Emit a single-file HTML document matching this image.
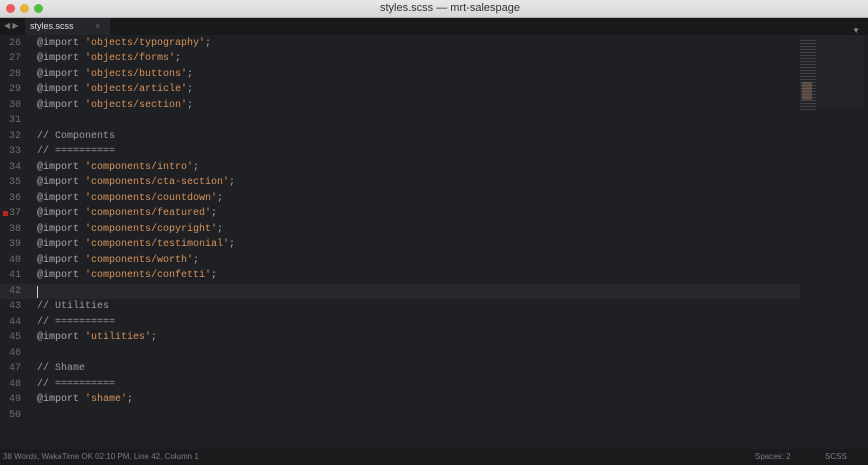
<!DOCTYPE html>
<html><head><meta charset="utf-8"><style>
html,body{margin:0;width:868px;height:465px;overflow:hidden}
body{background:#1f2023;font-family:"Liberation Sans",sans-serif;position:relative}
.title{position:absolute;left:0;top:0;width:868px;height:17px;background:linear-gradient(#e8e8e8,#d6d6d6);border-bottom:1px solid #b0b0b0;z-index:3}
.dot{position:absolute;top:4px;width:9px;height:9px;border-radius:50%}
.title .t{position:absolute;left:380px;top:2px;font-size:11px;color:#333}
.tabs{position:absolute;top:18px;left:0;width:868px;height:17px;background:#18191b;z-index:3}
.tab{position:absolute;left:25px;top:0;width:85px;height:17px;background:#26272b;color:#ddd;font-size:9px;line-height:17px;padding-left:5px;box-sizing:border-box}
.code{position:absolute;left:0;top:35.5px;width:800px;font-family:"Liberation Mono",monospace;font-size:10px;line-height:15.52px}
.l{height:15.52px;position:relative}
.n{position:absolute;left:9px;color:#6c6d72}
.c{position:absolute;left:37px;color:#a8a9b0;white-space:pre}
.s{color:#d8935c}
.cm{color:#9a9ba0}
.cur{background:#27282c}
.status{position:absolute;left:0;top:449px;width:868px;height:16px;background:#1a1b1d;color:#7a7b80;font-size:8px;line-height:16px}
</style></head><body>
<div class="title">
<div class="dot" style="left:6px;background:#ee5a5a"></div>
<div class="dot" style="left:20px;background:#e8b23a"></div>
<div class="dot" style="left:34px;background:#4ec13c"></div>
<div class="t">styles.scss — mrt-salespage</div>
</div>
<div class="tabs"><span style="position:absolute;left:4px;top:3px;color:#777;font-size:8px">◀ ▶</span><div class="tab">styles.scss<span style="position:absolute;left:70px;color:#666">×</span></div></div>
<div class="code"><div class="l"><span class="n">26</span><span class="c">@import <span class="s">'objects/typography'</span>;</span></div><div class="l"><span class="n">27</span><span class="c">@import <span class="s">'objects/forms'</span>;</span></div><div class="l"><span class="n">28</span><span class="c">@import <span class="s">'objects/buttons'</span>;</span></div><div class="l"><span class="n">29</span><span class="c">@import <span class="s">'objects/article'</span>;</span></div><div class="l"><span class="n">30</span><span class="c">@import <span class="s">'objects/section'</span>;</span></div><div class="l"><span class="n">31</span></div><div class="l"><span class="n">32</span><span class="c cm">// Components</span></div><div class="l"><span class="n">33</span><span class="c cm">// ==========</span></div><div class="l"><span class="n">34</span><span class="c">@import <span class="s">'components/intro'</span>;</span></div><div class="l"><span class="n">35</span><span class="c">@import <span class="s">'components/cta-section'</span>;</span></div><div class="l"><span class="n">36</span><span class="c">@import <span class="s">'components/countdown'</span>;</span></div><div class="l"><span style="position:absolute;left:3px;top:5px;width:5px;height:5px;background:#c02020"></span><span class="n">37</span><span class="c">@import <span class="s">'components/featured'</span>;</span></div><div class="l"><span class="n">38</span><span class="c">@import <span class="s">'components/copyright'</span>;</span></div><div class="l"><span class="n">39</span><span class="c">@import <span class="s">'components/testimonial'</span>;</span></div><div class="l"><span class="n">40</span><span class="c">@import <span class="s">'components/worth'</span>;</span></div><div class="l"><span class="n">41</span><span class="c">@import <span class="s">'components/confetti'</span>;</span></div><div class="l cur"><span class="n">42</span><span style="position:absolute;left:37px;top:2px;width:1px;height:12px;background:#ccc"></span></div><div class="l"><span class="n">43</span><span class="c cm">// Utilities</span></div><div class="l"><span class="n">44</span><span class="c cm">// ==========</span></div><div class="l"><span class="n">45</span><span class="c">@import <span class="s">'utilities'</span>;</span></div><div class="l"><span class="n">46</span></div><div class="l"><span class="n">47</span><span class="c cm">// Shame</span></div><div class="l"><span class="n">48</span><span class="c cm">// ==========</span></div><div class="l"><span class="n">49</span><span class="c">@import <span class="s">'shame'</span>;</span></div><div class="l"><span class="n">50</span></div></div>
<div style="position:absolute;left:800px;top:35px;width:64px;height:74px;background:#232428"></div>
<div style="position:absolute;left:800px;top:40px;width:16px;height:70px;background:repeating-linear-gradient(#55565c 0 1px,transparent 1px 3px);opacity:.6"></div>
<div style="position:absolute;left:802px;top:82px;width:10px;height:18px;background:#7a6050;opacity:.6"></div>
<div style="position:absolute;right:8px;top:26px;color:#888;font-size:8px;z-index:4">▼</div>
<div class="status"><span style="margin-left:3px">38 Words, WakaTime OK 02:10 PM, Line 42, Column 1</span><span style="position:absolute;left:755px">Spaces: 2</span><span style="position:absolute;left:825px">SCSS</span></div>
</body></html>
